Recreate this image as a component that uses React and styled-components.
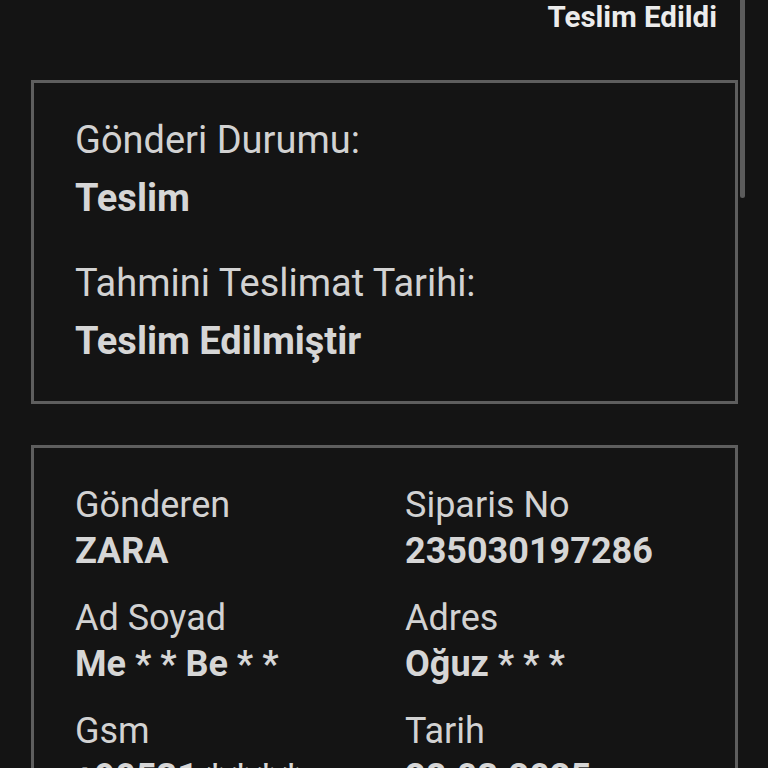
import React from 'react';
import styled, { createGlobalStyle } from 'styled-components';

const GlobalStyle = createGlobalStyle`
  html, body {
    margin: 0;
    padding: 0;
    background: #141414;
    overflow: hidden;
  }
  body {
    font-family: Roboto, 'Liberation Sans', sans-serif;
    color: #d4d4d4;
  }
`;

const Page = styled.div`
  min-height: 768px;
  padding: 0 30px 0 31px;
  background: #141414;
`;

const Header = styled.div`
  display: flex;
  justify-content: flex-end;
  padding: 3px 21px 0 0;
  margin-bottom: 49px;
  font-size: 29.5px;
  line-height: 28px;
  font-weight: 700;
  color: #ececec;
`;

const Card = styled.section`
  border: 3px solid #5e5e5e;
  padding: ${p => p.$pad};
  margin-bottom: 41px;
`;

const Stack = styled.div`
  display: flex;
  flex-direction: column;
  gap: 39px;
`;

const Field = styled.div`
  display: flex;
  flex-direction: column;
  gap: ${p => p.$gap}px;
`;

const Label = styled.div`
  font-size: ${p => p.$size || 36}px;
  line-height: ${p => (p.$size || 36) + 8}px;
  font-weight: 400;
  color: #d2d2d2;
  white-space: nowrap;
`;

const Value = styled.div`
  font-size: ${p => p.$size || 36}px;
  line-height: ${p => (p.$size || 36) + 8}px;
  font-weight: 700;
  color: #d6d6d6;
  white-space: nowrap;
`;

const Grid = styled.div`
  display: grid;
  grid-template-columns: 330px 1fr;
  row-gap: 23px;
`;

const Scrollbar = styled.div`
  position: fixed;
  top: 0;
  left: 740px;
  width: 5px;
  height: 198px;
  background: #5c5c5c;
  border-radius: 0 0 3px 3px;
`;

const details = [
  ['Gönderen', 'ZARA'],
  ['Siparis No', '235030197286'],
  ['Ad Soyad', 'Me * * Be * *'],
  ['Adres', 'Oğuz * * *'],
  ['Gsm', '+90531 * * * *'],
  ['Tarih', '28.03.2025'],
];

export default function App() {
  return (
    <>
      <GlobalStyle />
      <Page>
        <Header>Teslim Edildi</Header>
        <Card $pad="34px 0 37px 41px">
          <Stack>
            <Field $gap={12}>
              <Label $size={38}>Gönderi Durumu:</Label>
              <Value $size={38}>Teslim</Value>
            </Field>
            <Field $gap={12}>
              <Label $size={38}>Tahmini Teslimat Tarihi:</Label>
              <Value $size={38}>Teslim Edilmiştir</Value>
            </Field>
          </Stack>
        </Card>
        <Card $pad="35px 0 36px 41px">
          <Grid>
            {details.map(([label, value]) => (
              <Field key={label} $gap={2}>
                <Label>{label}</Label>
                <Value>{value}</Value>
              </Field>
            ))}
          </Grid>
        </Card>
      </Page>
      <Scrollbar />
    </>
  );
}
